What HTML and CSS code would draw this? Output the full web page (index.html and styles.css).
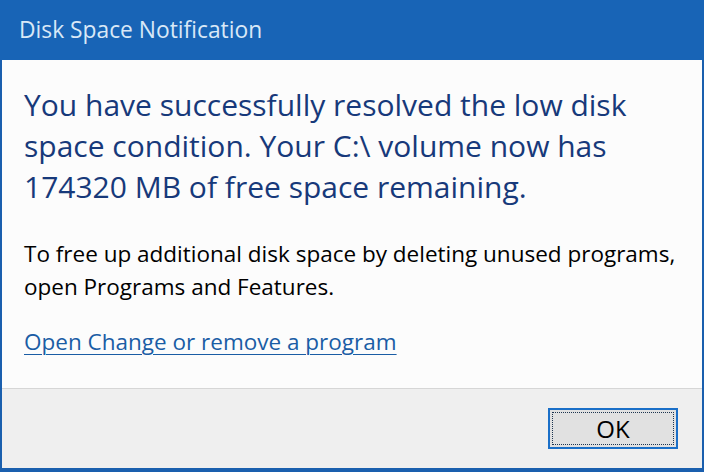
FILE: index.html
```html
<!DOCTYPE html>
<html lang="en">
<head>
<meta charset="utf-8">
<title>Disk Space Notification</title>
<link rel="stylesheet" href="styles.css">
</head>
<body>
<div class="window">
  <div class="titlebar">Disk Space Notification</div>
  <div class="content">
    <p class="main">You have successfully resolved the low disk space condition. Your C:\ volume now has 174320 MB of free space remaining.</p>
    <p class="body">To free up additional disk space by deleting unused programs, open Programs and Features.</p>
    <a class="link" href="#">Open Change or remove a program</a>
  </div>
  <div class="footer">
    <button class="ok"><span class="focus">OK</span></button>
  </div>
</div>
</body>
</html>
```

FILE: styles.css
```css
html, body {
  margin: 0;
  padding: 0;
}
body {
  width: 704px;
  height: 472px;
  overflow: hidden;
  font-family: "Open Sans", "Noto Sans", sans-serif;
}
.window {
  box-sizing: border-box;
  width: 704px;
  height: 472px;
  display: flex;
  flex-direction: column;
  border-left: 2px solid #1a5fae;
  border-right: 2px solid #1a5fae;
  border-bottom: 4px solid #1a5fae;
  background: #fcfcfc;
}
.titlebar {
  height: 60px;
  flex: none;
  background: #1864b6;
  color: #d9e8f7;
  font-size: 22.8px;
  line-height: 60px;
  padding-left: 19px;
  margin: 0 -2px;
}
.content {
  flex: 1;
  padding: 24px 20px 0 22px;
  background: #fcfcfc;
}
.main {
  margin: 0;
  font-size: 30px;
  line-height: 41px;
  color: #17397a;
}
.body {
  margin: 31px 0 0 0;
  font-size: 22.5px;
  line-height: 32.5px;
  color: #000;
}
.link {
  display: inline-block;
  margin-top: 24px;
  font-size: 22.5px;
  line-height: 30px;
  color: #1a5da5;
  text-decoration: underline;
  text-decoration-thickness: 1px;
  text-underline-offset: 4px;
}
.footer {
  box-sizing: border-box;
  height: 80px;
  flex: none;
  background: #efefef;
  border-top: 1px solid #d6d6d6;
  display: flex;
  align-items: center;
  justify-content: flex-end;
  padding-right: 24px;
}
.ok {
  box-sizing: border-box;
  width: 130px;
  height: 41px;
  padding: 2px;
  border: 2px solid #1a6fc8;
  background: #e1e1e1;
  font-family: "Open Sans", "Noto Sans", sans-serif;
  font-size: 24px;
  color: #000;
  display: flex;
}
.focus {
  flex: 1;
  border: 1px dotted #1d3550;
  display: flex;
  align-items: center;
  justify-content: center;
}
```
